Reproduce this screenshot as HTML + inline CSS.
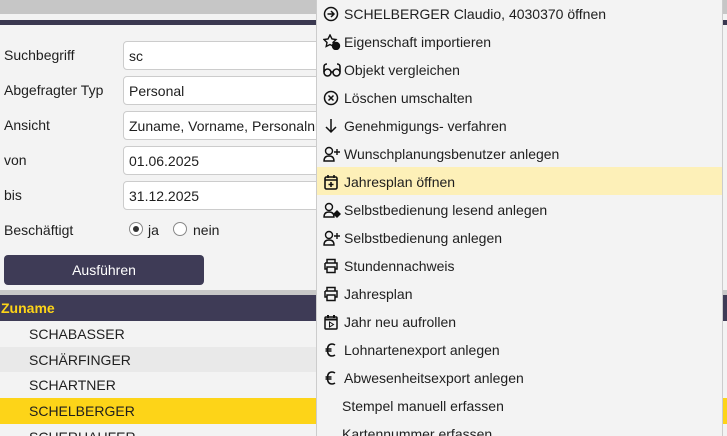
<!DOCTYPE html>
<html style="width:727px;height:436px;overflow:hidden"><head><meta charset="utf-8"><style>
*{box-sizing:border-box;margin:0;padding:0}
body{width:727px;height:436px;overflow:hidden;background:#f3f3f3;font-family:"Liberation Sans",sans-serif;font-size:14px;color:#1e1e1e;position:relative}
.a{position:absolute}
.lbl{left:4px}
.inp{left:123px;width:220px;height:29px;background:#fff;border:1px solid #ccc;border-radius:4px;padding:6px 5px;white-space:nowrap;overflow:hidden}
.row{left:0;width:316px;height:26px;padding:5px 0 0 29px}
.mi{left:317px;width:405px;height:28px;padding:6px 0 0 27px;white-space:nowrap}
.mi svg{position:absolute;left:6px;top:6px}
</style></head><body>
<div class="a" style="left:0;top:0;width:727px;height:14px;background:#c6c6c6"></div>
<div class="a" style="left:0;top:20px;width:727px;height:5px;background:#3a3850"></div>
<div class="a lbl" style="top:47px">Suchbegriff</div><div class="a inp" style="top:41px">sc</div>
<div class="a lbl" style="top:82px">Abgefragter Typ</div><div class="a inp" style="top:76px">Personal</div>
<div class="a lbl" style="top:117px">Ansicht</div><div class="a inp" style="top:111px">Zuname, Vorname, Personalnr</div>
<div class="a lbl" style="top:152px">von</div><div class="a inp" style="top:146px">01.06.2025</div>
<div class="a lbl" style="top:187px">bis</div><div class="a inp" style="top:181px">31.12.2025</div>
<div class="a lbl" style="top:222px">Beschäftigt</div>
<div class="a" style="left:129px;top:222px;width:14px;height:14px;border:1px solid #888;border-radius:50%;background:#fff"><div style="margin:3px;width:6px;height:6px;border-radius:50%;background:#333"></div></div>
<div class="a" style="left:148px;top:222px">ja</div>
<div class="a" style="left:173px;top:222px;width:14px;height:14px;border:1px solid #888;border-radius:50%;background:#fff"></div>
<div class="a" style="left:193px;top:222px">nein</div>
<div class="a" style="left:4px;top:255px;width:200px;height:30px;background:#3e3b56;border-radius:4px;color:#fff;text-align:center;padding-top:7px">Ausführen</div>
<div class="a" style="left:0;top:290px;width:727px;height:5px;background:#c8c8c8"></div>
<div class="a" style="left:0;top:295px;width:727px;height:26px;background:#3e3b56;color:#fdd418;font-weight:bold;padding:5px 0 0 1px">Zuname</div>
<div class="a row" style="top:321px;background:#f3f3f3">SCHABASSER</div>
<div class="a row" style="top:347px;background:#e9e9e9">SCHÄRFINGER</div>
<div class="a row" style="top:372px;background:#f3f3f3">SCHARTNER</div>
<div class="a row" style="top:398px;background:#fdd418;width:727px">SCHELBERGER</div>
<div class="a row" style="top:424px">SCHERHAUFER</div>
<div class="a" style="left:316px;top:0;width:407px;height:436px;background:#f3f3f3;border-left:1px solid #ccc;border-right:1px solid #ccc"></div>
<div class="a" style="left:317px;top:167px;width:405px;height:28px;background:#fdf0b8"></div>
<div class="a mi" style="top:0"><svg width="16" height="16" viewBox="0 0 16 16" fill="none" stroke="#111" stroke-width="1.5"><circle cx="8" cy="8" r="6.5"/><path d="M4.5 8h6M8 5l3 3-3 3"/></svg>SCHELBERGER Claudio, 4030370 öffnen</div>
<div class="a mi" style="top:28px"><svg width="18" height="16" viewBox="0 0 18 16" fill="none" stroke="#111" stroke-width="1.4"><path d="M7 1l2 4 4 .5-3 3 .8 4L7 10.5 3.2 12.5 4 8.5 1 5.5 5 5z"/><circle cx="13" cy="12" r="3.5" fill="#111"/></svg>Eigenschaft importieren</div>
<div class="a mi" style="top:56px"><svg width="18" height="16" viewBox="0 0 18 16" fill="none" stroke="#111" stroke-width="1.6"><circle cx="4.5" cy="10.5" r="3.5"/><circle cx="13.5" cy="10.5" r="3.5"/><path d="M1 10V5Q1 2 4 2M17 10V5Q17 2 14 2M8 10h2"/></svg>Objekt vergleichen</div>
<div class="a mi" style="top:84px"><svg width="16" height="16" viewBox="0 0 16 16" fill="none" stroke="#111" stroke-width="1.5"><circle cx="8" cy="8" r="6.5"/><path d="M5.5 5.5l5 5M10.5 5.5l-5 5"/></svg>Löschen umschalten</div>
<div class="a mi" style="top:112px"><svg width="16" height="16" viewBox="0 0 16 16" fill="none" stroke="#111" stroke-width="1.5"><path d="M8 1v13M3 9l5 5 5-5"/></svg>Genehmigungs- verfahren</div>
<div class="a mi" style="top:140px"><svg width="18" height="16" viewBox="0 0 18 16" fill="none" stroke="#111" stroke-width="1.4"><circle cx="6" cy="5" r="3.5"/><path d="M1 15q0-5 5-5t5 5zM14 3v6M11 6h6"/></svg>Wunschplanungsbenutzer anlegen</div>
<div class="a mi" style="top:168px"><svg width="16" height="16" viewBox="0 0 16 16" fill="none" stroke="#111" stroke-width="1.6"><rect x="2" y="3" width="12" height="12" rx="1.5"/><path d="M5 1v3M11 1v3M2 6h12M8 8v5M5.5 10.5h5"/></svg>Jahresplan öffnen</div>
<div class="a mi" style="top:196px"><svg width="18" height="16" viewBox="0 0 18 16" fill="none" stroke="#111" stroke-width="1.4"><circle cx="6" cy="5" r="3.5"/><path d="M1 15q0-5 5-5t5 5z"/><path d="M11 12l3-3 3 3-3 3z" fill="#111"/></svg>Selbstbedienung lesend anlegen</div>
<div class="a mi" style="top:224px"><svg width="18" height="16" viewBox="0 0 18 16" fill="none" stroke="#111" stroke-width="1.4"><circle cx="6" cy="5" r="3.5"/><path d="M1 15q0-5 5-5t5 5zM14 3v6M11 6h6"/></svg>Selbstbedienung anlegen</div>
<div class="a mi" style="top:252px"><svg width="16" height="16" viewBox="0 0 16 16" fill="none" stroke="#111" stroke-width="1.5"><path d="M4 5V1.5h8V5M2 5h12v6h-2M4 11H2V5"/><rect x="4" y="9" width="8" height="5.5"/></svg>Stundennachweis</div>
<div class="a mi" style="top:280px"><svg width="16" height="16" viewBox="0 0 16 16" fill="none" stroke="#111" stroke-width="1.5"><path d="M4 5V1.5h8V5M2 5h12v6h-2M4 11H2V5"/><rect x="4" y="9" width="8" height="5.5"/></svg>Jahresplan</div>
<div class="a mi" style="top:308px"><svg width="16" height="16" viewBox="0 0 16 16" fill="none" stroke="#111" stroke-width="1.5"><rect x="2" y="3" width="12" height="12" rx="1"/><path d="M5 1v3M11 1v3M2 5.5h12" stroke-width="2"/><path d="M6.5 8v5l4-2.5z" stroke-width="1"/></svg>Jahr neu aufrollen</div>
<div class="a mi" style="top:336px"><svg width="16" height="16" viewBox="0 0 16 16" fill="none" stroke="#111" stroke-width="1.6"><path d="M12 3Q10.5 2 9 2 4.5 2 4.5 8T9 14q1.5 0 3-1M2.5 7h6M2.5 9h6"/></svg>Lohnartenexport anlegen</div>
<div class="a mi" style="top:364px"><svg width="16" height="16" viewBox="0 0 16 16" fill="none" stroke="#111" stroke-width="1.6"><path d="M12 3Q10.5 2 9 2 4.5 2 4.5 8T9 14q1.5 0 3-1M2.5 7h6M2.5 9h6"/></svg>Abwesenheitsexport anlegen</div>
<div class="a mi" style="top:392px;padding-left:25px">Stempel manuell erfassen</div>
<div class="a mi" style="top:420px;padding-left:25px;height:16px;overflow:hidden">Kartennummer erfassen</div>
</body></html>
